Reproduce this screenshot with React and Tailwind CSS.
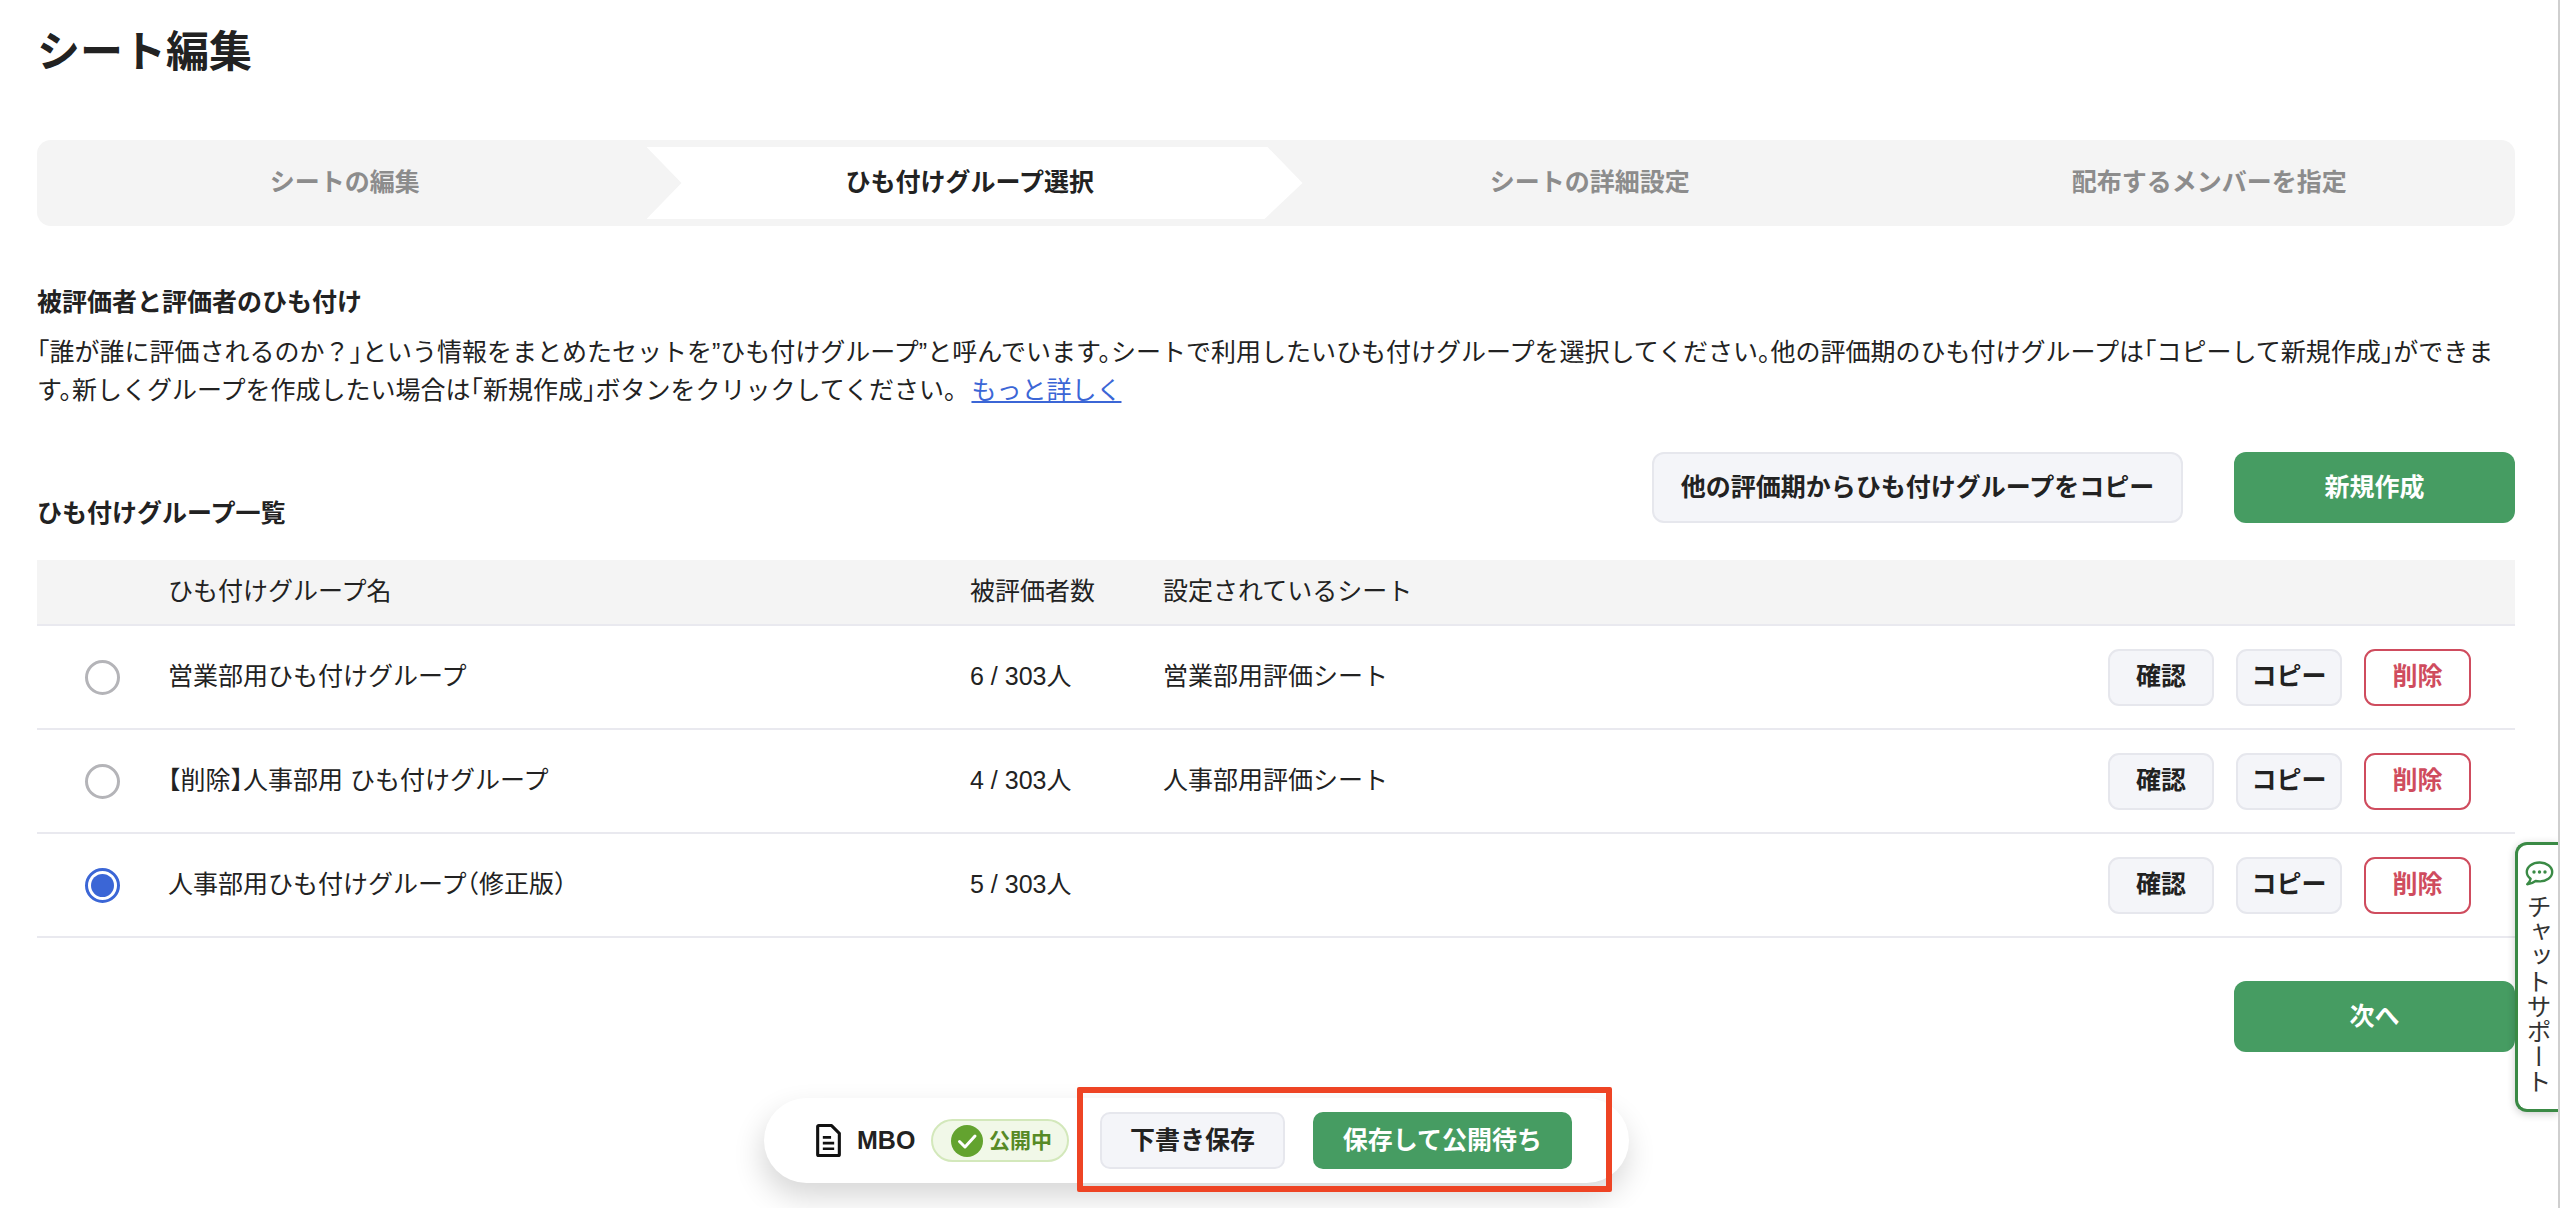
const Row = ({ name, count, sheet, selected }) => (
  <div className="grid grid-cols-[131px_802px_193px_1fr_auto] items-center h-[104px] border-b-2 border-[#e9e9ef]">
    <div className="pl-[48px]">
      {selected ? (
        <div className="w-[35px] h-[35px] rounded-full border-[3px] border-[#3b66d6] p-[3px]">
          <div className="w-full h-full rounded-full bg-[#3b66d6]" />
        </div>
      ) : (
        <div className="w-[35px] h-[35px] rounded-full border-[3px] border-[#b4b4b8]" />
      )}
    </div>
    <div>{name}</div>
    <div>{count}</div>
    <div>{sheet}</div>
    <div className="flex gap-[22px] pr-[44px]">
      <button className="w-[106px] h-[57px] rounded-[11px] bg-[#f4f5f9] border-2 border-[#e6e7ed] font-bold">確認</button>
      <button className="w-[106px] h-[57px] rounded-[11px] bg-[#f4f5f9] border-2 border-[#e6e7ed] font-bold">コピー</button>
      <button className="w-[107px] h-[57px] rounded-[11px] bg-white border-2 border-[#cf4c5e] text-[#cf4c5e] font-bold">削除</button>
    </div>
  </div>
);

const Step = ({ children, active, shift }) =>
  active ? (
    <div className="-ml-[10px] -mr-[27px] h-[72px] bg-white flex items-center justify-center pr-[10px] [clip-path:polygon(0_0,621px_0,656px_50%,618px_100%,0_100%,35px_50%)]">
      <span className="font-bold text-[#222]">{children}</span>
    </div>
  ) : (
    <div className={`flex items-center justify-center font-bold text-[#8c8c8c] ${shift ? "pl-[8px]" : "pr-[4px]"}`}>{children}</div>
  );

export default function App() {
  return (
    <div
      lang="ja"
      className="relative h-[1208px] overflow-hidden bg-white border-r-2 border-[#cfcfcf] text-[25px] text-[#222] [font-feature-settings:'halt'] font-['Liberation_Sans','Noto_Sans_CJK_JP',sans-serif]"
    >
      <div className="pt-[26px] px-[37px] w-[2552px]">
        <h1 className="text-[43px] leading-[52px] font-bold">シート編集</h1>

        <div className="mt-[62px] h-[86px] rounded-[14px] bg-[#f4f4f4] grid grid-cols-4 items-stretch py-[7px]">
          <Step>シートの編集</Step>
          <Step active>ひも付けグループ選択</Step>
          <Step shift>シートの詳細設定</Step>
          <Step shift>配布するメンバーを指定</Step>
        </div>

        <h2 className="mt-[57px] font-bold leading-[38px]">被評価者と評価者のひも付け</h2>
        <p className="mt-[13px] leading-[37.5px]">
          「誰が誰に評価されるのか？」という情報をまとめたセットを”ひも付けグループ”と呼んでいます。シートで利用したいひも付けグループを選択してください。他の評価期のひも付けグループは「コピーして新規作成」ができます。新しくグループを作成したい場合は「新規作成」ボタンをクリックしてください。{" "}
          <a className="ml-[8px] text-[#3b66d6] underline">もっと詳しく</a>
        </p>

        <div className="mt-[43px] flex items-start justify-between">
          <h2 className="mt-[42px] font-bold leading-[38px]">ひも付けグループ一覧</h2>
          <div className="flex gap-[51px]">
            <button className="w-[531px] h-[71px] rounded-[12px] bg-[#f4f5f9] border-2 border-[#e6e7ed] font-bold">他の評価期からひも付けグループをコピー</button>
            <button className="w-[281px] h-[71px] rounded-[12px] bg-[#469c62] text-white font-bold">新規作成</button>
          </div>
        </div>

        <div className="mt-[28px]">
          <div className="grid grid-cols-[131px_802px_193px_1fr] items-center h-[66px] bg-[#f4f4f4] border-b-2 border-[#e9e9ef]">
            <div />
            <div>ひも付けグループ名</div>
            <div>被評価者数</div>
            <div>設定されているシート</div>
          </div>
          <Row name="営業部用ひも付けグループ" count="6 / 303人" sheet="営業部用評価シート" />
          <Row name="【削除】人事部用 ひも付けグループ" count="4 / 303人" sheet="人事部用評価シート" />
          <Row name="人事部用ひも付けグループ（修正版）" count="5 / 303人" sheet="" selected />
        </div>

        <div className="mt-[43px] flex justify-end">
          <button className="w-[281px] h-[71px] rounded-[12px] bg-[#469c62] text-white font-bold">次へ</button>
        </div>
      </div>

      {/* chat tab */}
      <div className="absolute left-[2515px] top-[842px] w-[43px] h-[270px] bg-white border-[3px] border-r-0 border-[#3a8a45] rounded-l-[12px] shadow-[0_2px_8px_rgba(0,0,0,0.2)] flex flex-col items-center pt-[16px] pl-[2px]">
        <svg width="29" height="25" viewBox="0 0 29 25" fill="none" className="shrink-0">
          <path d="M14.5 1.5C7.6 1.5 1.8 5.6 1.8 11c0 2.7 1.5 5.1 3.8 6.8-.3 1.9-1.4 3.9-3.3 5.4 3.3-.3 6.2-1.6 8.3-3.2 1.2.3 2.5.4 3.9.4 6.9 0 12.7-4 12.7-9.4S21.4 1.5 14.5 1.5Z" stroke="#3a8a45" strokeWidth="2.4" strokeLinejoin="round" />
          <circle cx="9" cy="11" r="1.7" fill="#3a8a45" />
          <circle cx="14.5" cy="11" r="1.7" fill="#3a8a45" />
          <circle cx="20" cy="11" r="1.7" fill="#3a8a45" />
        </svg>
        <span className="mt-[8px] -translate-x-[2px] [writing-mode:vertical-rl] [font-feature-settings:normal] text-[25px] leading-[30px] text-[#333]">チャットサポート</span>
      </div>

      {/* floating save bar */}
      <div className="absolute left-[764px] top-[1098px] w-[865px] h-[85px] rounded-full bg-white shadow-[-2px_14px_30px_rgba(0,0,0,0.16)] flex items-center pl-[52px]">
        <svg width="25" height="33" viewBox="0 0 24 32" fill="none" className="shrink-0">
          <path d="M1.5 2.5a1 1 0 0 1 1-1h12.5l7.5 7.5v20.5a1 1 0 0 1-1 1H2.5a1 1 0 0 1-1-1V2.5Z" stroke="#111" strokeWidth="3" strokeLinejoin="round" />
          <path d="M6.5 13h8M6.5 18.5h11M6.5 24h11" stroke="#111" strokeWidth="2.6" />
        </svg>
        <span className="ml-[16px] w-[74px] font-bold">MBO</span>
        <div className="h-[43px] w-[138px] rounded-full bg-[#f1f8e8] border-2 border-[#d3e8bb] flex items-center pl-[18px] gap-[6px] text-[21px] font-bold text-[#578a26]">
          <svg width="32" height="32" viewBox="0 0 32 32" className="shrink-0">
            <circle cx="16" cy="16" r="16" fill="#63a32f" />
            <path d="M8.5 16.5l5.5 5.5 10-11" stroke="#fff" strokeWidth="3" fill="none" strokeLinecap="round" strokeLinejoin="round" />
          </svg>
          <span>公開中</span>
        </div>
        <button className="ml-[31px] w-[185px] h-[57px] rounded-[10px] bg-[#f4f5f9] border-2 border-[#e6e7ed] font-bold">下書き保存</button>
        <button className="ml-[28px] w-[259px] h-[57px] rounded-[10px] bg-[#469c62] text-white font-bold">保存して公開待ち</button>
      </div>

      {/* annotation */}
      <div className="absolute left-[1077px] top-[1087px] w-[535px] h-[105px] border-[6px] border-[#ee4424] rounded-[2px]" />
    </div>
  );
}
